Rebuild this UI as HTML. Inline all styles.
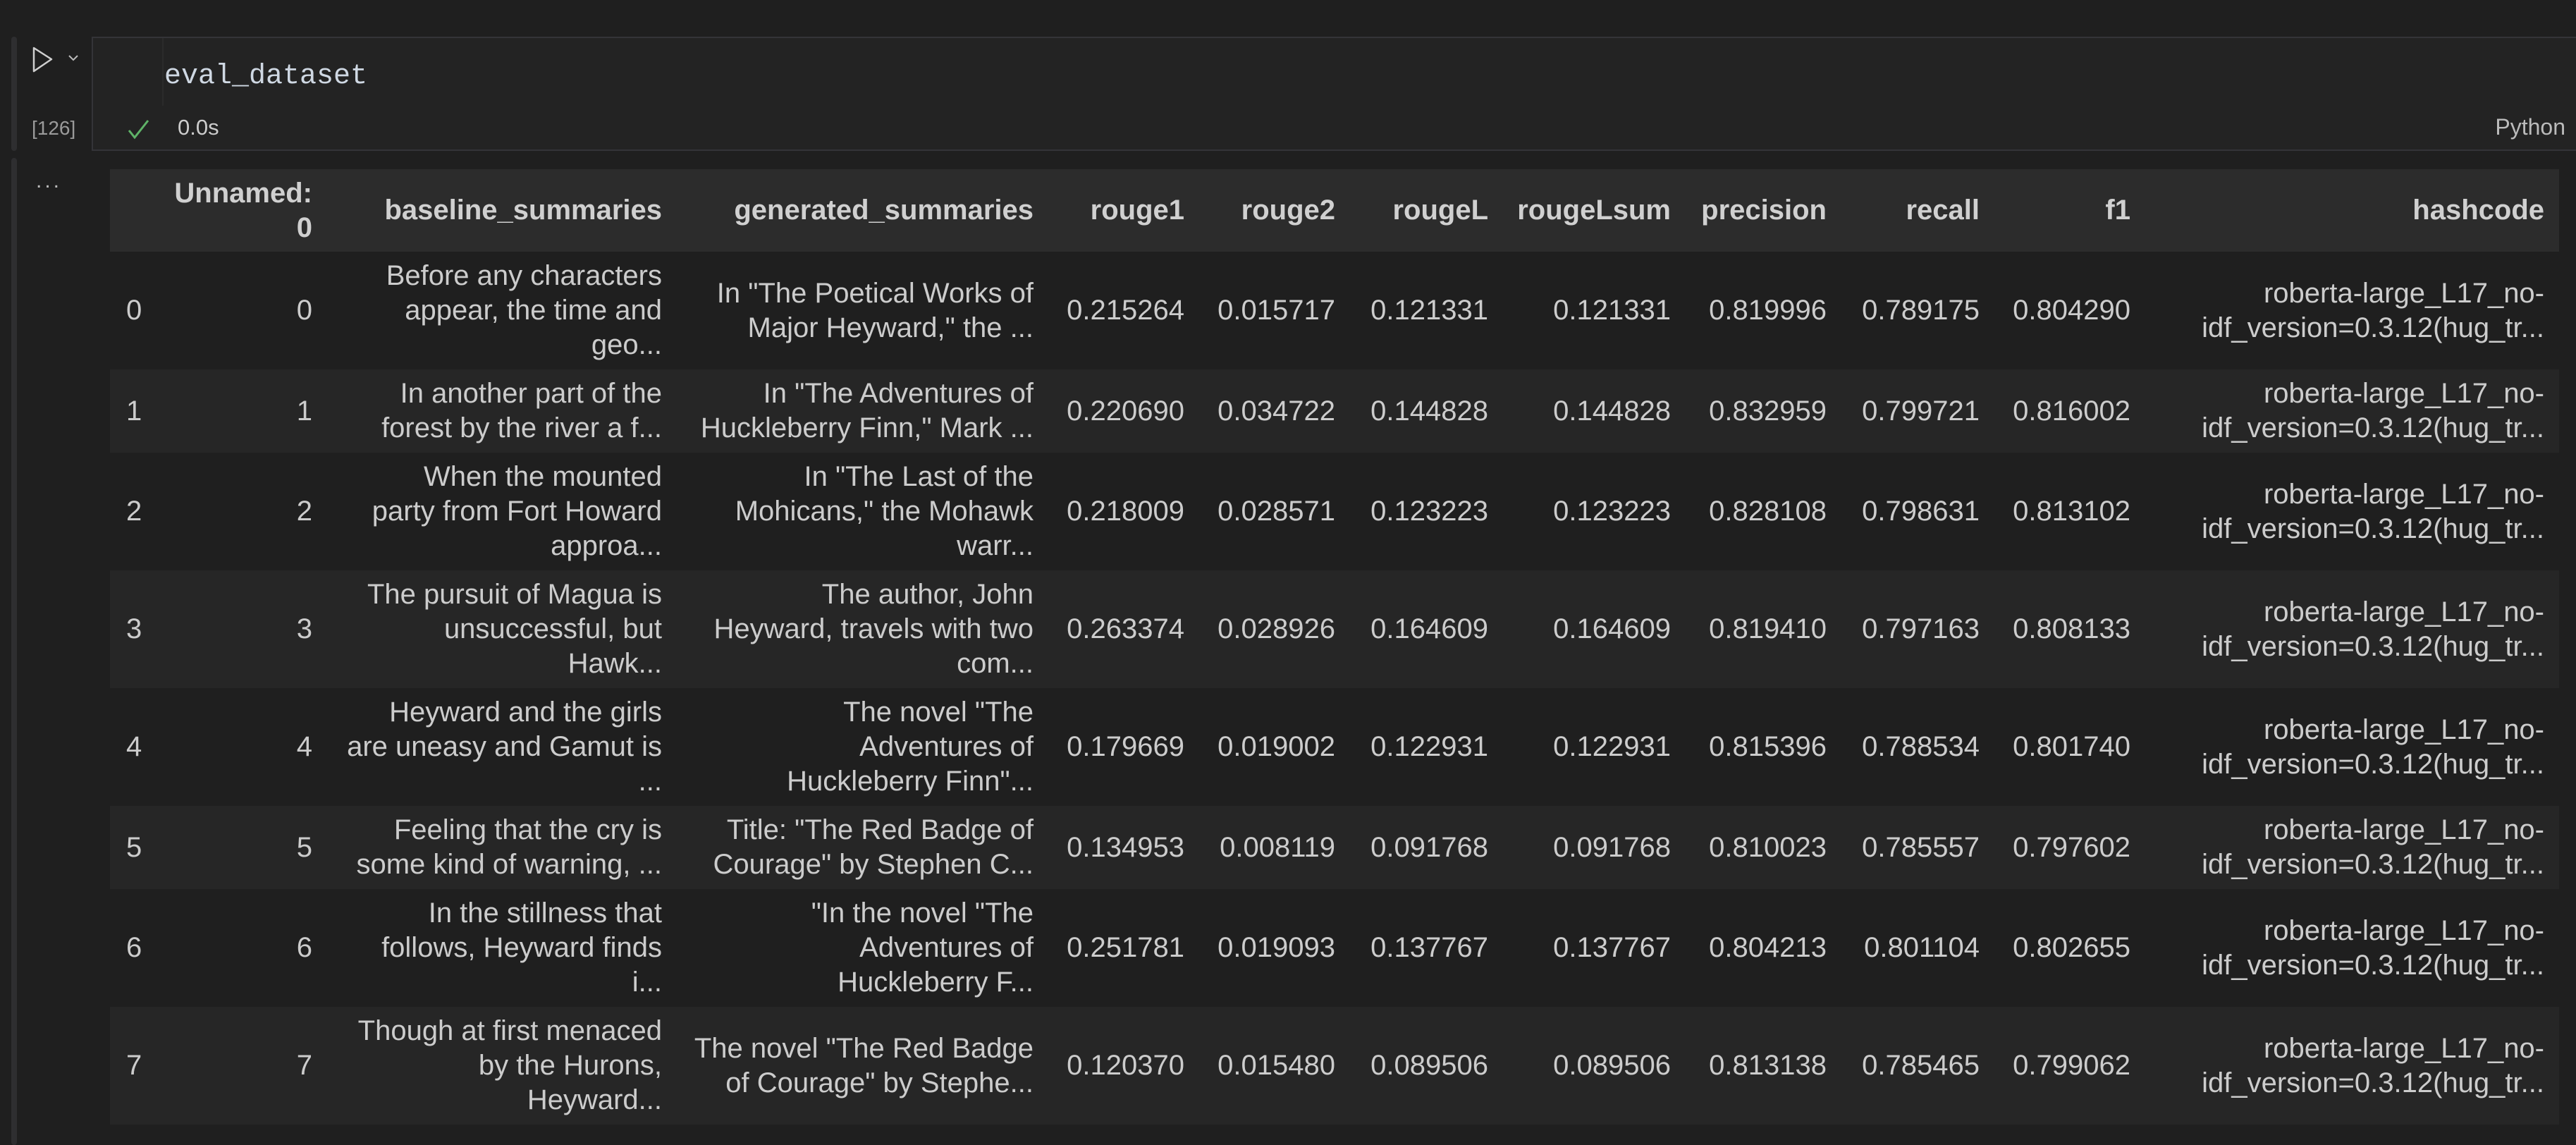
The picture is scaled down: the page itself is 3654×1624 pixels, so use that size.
<!DOCTYPE html>
<html><head><meta charset="utf-8"><style>
html,body{margin:0;padding:0;background:#1f1f1f;width:3654px;height:1582px;overflow:hidden;font-family:"Liberation Sans",sans-serif;color:#cccccc;}
.abs{position:absolute;}
.bar{position:absolute;left:16px;width:8px;background:#2e2e30;border-radius:4px;}
.cell{position:absolute;left:130px;top:52px;width:3540px;height:162px;border:2px solid #343438;background:#232323;box-sizing:border-box;}
table{position:absolute;left:156px;top:240px;border-collapse:collapse;table-layout:fixed;font-size:40px;line-height:49px;}
td,th{text-align:right;padding:0 21px 0 0;white-space:nowrap;vertical-align:middle;}
th{font-weight:bold;color:#d0d0d0;height:117px;}
thead tr{background:#2c2c2c;}
tbody tr:nth-child(even){background:#262626;}
tr.t3{height:167px;} tr.t2{height:118px;}
td:first-child{text-align:left;padding-left:23px;}
</style></head><body>
<div class="bar" style="top:52px;height:162px"></div>
<div class="bar" style="top:224px;height:1400px"></div>
<div class="cell"></div>
<div class="abs" style="left:230px;top:54px;width:2px;height:96px;background:#2b2b2b"></div>
<svg class="abs" style="left:44px;top:64px" width="80" height="42"><path d="M4 4 L29 20 L4 37 Z" fill="none" stroke="#cfcfcf" stroke-width="2.5" stroke-linejoin="round"/><path d="M54 15 L60 21 L66 15" fill="none" stroke="#bbb" stroke-width="2"/></svg>
<div class="abs" style="left:45px;top:166px;font-size:28px;color:#9a9a9a;">[126]</div>
<svg class="abs" style="left:178px;top:166px" width="40" height="34"><path d="M5 19 L13 29 L32 5" fill="none" stroke="#5fb368" stroke-width="3"/></svg>
<div class="abs" style="left:252px;top:163px;font-size:31px;color:#cccccc;">0.0s</div>
<div class="abs" style="left:233px;top:86px;font-size:40px;font-family:'Liberation Mono',monospace;color:#cfd8e3;">eval_dataset</div>
<div class="abs" style="right:15px;top:162px;font-size:32px;color:#bbbbbb;">Python</div>
<div class="abs" style="left:51px;top:240px;font-size:30px;color:#bbb;letter-spacing:4px;">...</div>
<table>
<colgroup><col style="width:84px"><col style="width:224px"><col style="width:496px"><col style="width:527px"><col style="width:214px"><col style="width:214px"><col style="width:217px"><col style="width:259px"><col style="width:221px"><col style="width:217px"><col style="width:214px"><col style="width:587px"></colgroup>
<thead><tr><th></th><th>Unnamed:<br>0</th><th>baseline_summaries</th><th>generated_summaries</th><th>rouge1</th><th>rouge2</th><th>rougeL</th><th>rougeLsum</th><th>precision</th><th>recall</th><th>f1</th><th>hashcode</th></tr></thead>
<tbody>
<tr class="t3"><td>0</td><td>0</td><td>Before any characters<br>appear, the time and<br>geo...</td><td>In "The Poetical Works of<br>Major Heyward," the ...</td><td>0.215264</td><td>0.015717</td><td>0.121331</td><td>0.121331</td><td>0.819996</td><td>0.789175</td><td>0.804290</td><td>roberta-large_L17_no-<br>idf_version=0.3.12(hug_tr...</td></tr>
<tr class="t2"><td>1</td><td>1</td><td>In another part of the<br>forest by the river a f...</td><td>In "The Adventures of<br>Huckleberry Finn," Mark ...</td><td>0.220690</td><td>0.034722</td><td>0.144828</td><td>0.144828</td><td>0.832959</td><td>0.799721</td><td>0.816002</td><td>roberta-large_L17_no-<br>idf_version=0.3.12(hug_tr...</td></tr>
<tr class="t3"><td>2</td><td>2</td><td>When the mounted<br>party from Fort Howard<br>approa...</td><td>In "The Last of the<br>Mohicans," the Mohawk<br>warr...</td><td>0.218009</td><td>0.028571</td><td>0.123223</td><td>0.123223</td><td>0.828108</td><td>0.798631</td><td>0.813102</td><td>roberta-large_L17_no-<br>idf_version=0.3.12(hug_tr...</td></tr>
<tr class="t3"><td>3</td><td>3</td><td>The pursuit of Magua is<br>unsuccessful, but<br>Hawk...</td><td>The author, John<br>Heyward, travels with two<br>com...</td><td>0.263374</td><td>0.028926</td><td>0.164609</td><td>0.164609</td><td>0.819410</td><td>0.797163</td><td>0.808133</td><td>roberta-large_L17_no-<br>idf_version=0.3.12(hug_tr...</td></tr>
<tr class="t3"><td>4</td><td>4</td><td>Heyward and the girls<br>are uneasy and Gamut is<br>...</td><td>The novel "The<br>Adventures of<br>Huckleberry Finn"...</td><td>0.179669</td><td>0.019002</td><td>0.122931</td><td>0.122931</td><td>0.815396</td><td>0.788534</td><td>0.801740</td><td>roberta-large_L17_no-<br>idf_version=0.3.12(hug_tr...</td></tr>
<tr class="t2"><td>5</td><td>5</td><td>Feeling that the cry is<br>some kind of warning, ...</td><td>Title: "The Red Badge of<br>Courage" by Stephen C...</td><td>0.134953</td><td>0.008119</td><td>0.091768</td><td>0.091768</td><td>0.810023</td><td>0.785557</td><td>0.797602</td><td>roberta-large_L17_no-<br>idf_version=0.3.12(hug_tr...</td></tr>
<tr class="t3"><td>6</td><td>6</td><td>In the stillness that<br>follows, Heyward finds<br>i...</td><td>"In the novel "The<br>Adventures of<br>Huckleberry F...</td><td>0.251781</td><td>0.019093</td><td>0.137767</td><td>0.137767</td><td>0.804213</td><td>0.801104</td><td>0.802655</td><td>roberta-large_L17_no-<br>idf_version=0.3.12(hug_tr...</td></tr>
<tr class="t3"><td>7</td><td>7</td><td>Though at first menaced<br>by the Hurons,<br>Heyward...</td><td>The novel "The Red Badge<br>of Courage" by Stephe...</td><td>0.120370</td><td>0.015480</td><td>0.089506</td><td>0.089506</td><td>0.813138</td><td>0.785465</td><td>0.799062</td><td>roberta-large_L17_no-<br>idf_version=0.3.12(hug_tr...</td></tr>
</tbody></table>
</body></html>
